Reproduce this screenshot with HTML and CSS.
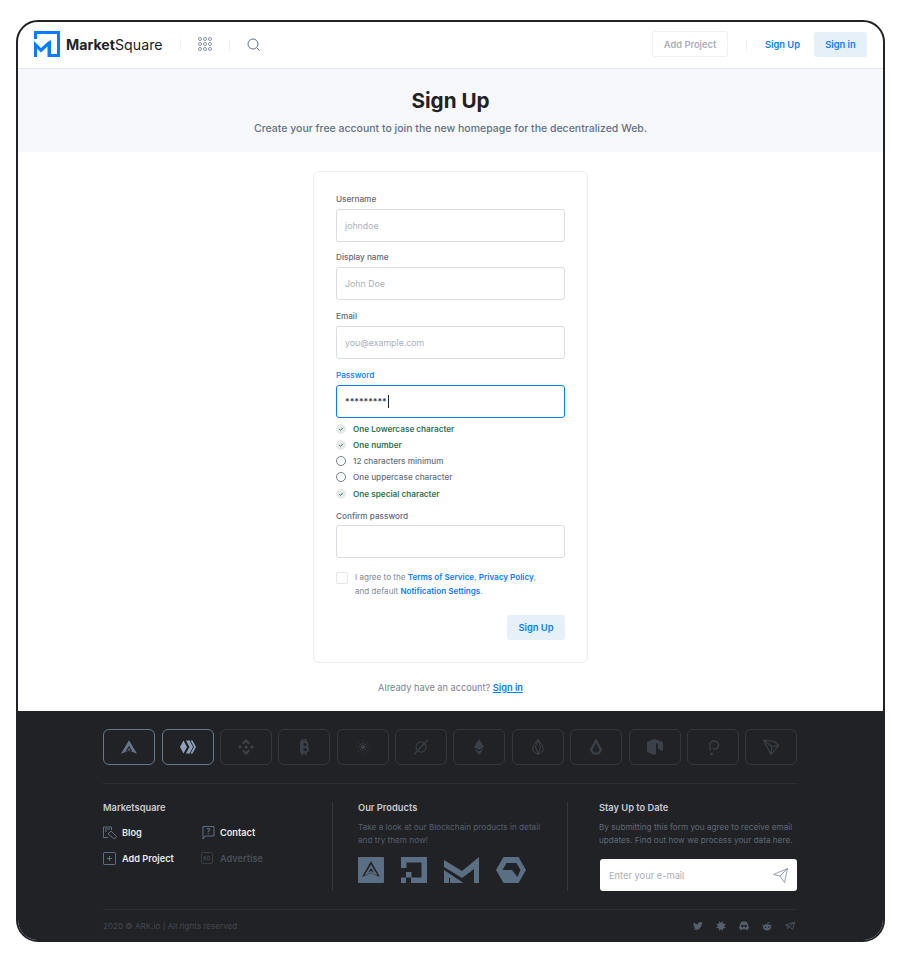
FILE: index.html
```html
<!DOCTYPE html>
<html lang="en">
<head>
<meta charset="utf-8">
<title>Sign Up - MarketSquare</title>
<link rel="stylesheet" href="styles.css">
</head>
<body>
<div class="frame">
  <header class="nav">
    <svg class="logo" viewBox="0 0 26 26"><path fill="#0a7cff" d="M0 0H26V26H17V23H23V3H3V8H0z"/><path fill="#0a7cff" d="M0 10L7 17L13.500 11L17 9V26H13.500V15.500L7 21.500L3 17.500V26H0z"/></svg>
    <span class="brand"><b>Market</b>Square</span>
    <i class="nav-sep"></i>
    <svg class="grid-ic" viewBox="0 0 14 14" fill="none" stroke="#6c7786" stroke-width=".9"><rect x=".6" y=".6" width="2.800" height="2.800" rx="1"/><rect x="5.600" y=".6" width="2.800" height="2.800" rx="1"/><rect x="10.600" y=".6" width="2.800" height="2.800" rx="1"/><rect x=".6" y="5.600" width="2.800" height="2.800" rx="1"/><rect x="5.600" y="5.600" width="2.800" height="2.800" rx="1"/><rect x="10.600" y="5.600" width="2.800" height="2.800" rx="1"/><rect x=".6" y="10.600" width="2.800" height="2.800" rx="1"/><rect x="5.600" y="10.600" width="2.800" height="2.800" rx="1"/><rect x="10.600" y="10.600" width="2.800" height="2.800" rx="1"/></svg>
    <i class="nav-sep"></i>
    <svg class="search-ic" viewBox="0 0 13 13" fill="none" stroke="#66717f" stroke-width="1"><circle cx="6" cy="6" r="5"/><path d="M9.700 9.700L12.500 12.500"/></svg>
    <span class="spacer"></span>
    <a class="btn-ghost">Add Project</a>
    <i class="nav-sep tall"></i>
    <a class="link-up">Sign Up</a>
    <a class="btn-light">Sign in</a>
  </header>

  <section class="hero">
    <h1>Sign Up</h1>
    <p>Create your free account to join the new homepage for the decentralized Web.</p>
  </section>

  <main class="content">
    <form class="card">
      <label class="lbl">Username</label>
      <div class="input ph">johndoe</div>
      <label class="lbl">Display name</label>
      <div class="input ph">John Doe</div>
      <label class="lbl">Email</label>
      <div class="input ph">you@example.com</div>
      <label class="lbl active">Password</label>
      <div class="input focus"><span class="stars">*********</span><i class="caret"></i></div>
      <ul class="rules">
        <li class="ok"><svg viewBox="0 0 10 10"><circle cx="5" cy="5" r="5" fill="#e6eae9"/><path d="M3.200 5.200l1.300 1.200 2.300-2.500" fill="none" stroke="#2f7d5b" stroke-width="1"/></svg>One Lowercase character</li>
        <li class="ok"><svg viewBox="0 0 10 10"><circle cx="5" cy="5" r="5" fill="#e6eae9"/><path d="M3.200 5.200l1.300 1.200 2.300-2.500" fill="none" stroke="#2f7d5b" stroke-width="1"/></svg>One number</li>
        <li><svg viewBox="0 0 10 10"><circle cx="5" cy="5" r="4.500" fill="none" stroke="#66717f" stroke-width=".9"/></svg>12 characters minimum</li>
        <li><svg viewBox="0 0 10 10"><circle cx="5" cy="5" r="4.500" fill="none" stroke="#66717f" stroke-width=".9"/></svg>One uppercase character</li>
        <li class="ok"><svg viewBox="0 0 10 10"><circle cx="5" cy="5" r="5" fill="#e6eae9"/><path d="M3.200 5.200l1.300 1.200 2.300-2.500" fill="none" stroke="#2f7d5b" stroke-width="1"/></svg>One special character</li>
      </ul>
      <label class="lbl tight">Confirm password</label>
      <div class="input"></div>
      <div class="agree">
        <span class="check"></span>
        <p>I agree to the <a>Terms of Service</a>, <a>Privacy Policy</a>,<br>and default <a>Notification Settings</a>.</p>
      </div>
      <div class="actions"><a class="btn-light big">Sign Up</a></div>
    </form>
    <p class="already">Already have an account? <a>Sign in</a></p>
  </main>

  <footer class="footer">
    <div class="coins">
      <div class="coin on"><svg viewBox="0 0 18 15"><path fill="#66788c" d="M9 0L18 15L9 11.500L0 15z"/><path fill="#212225" d="M9 6L5 12.500 9 10.800 13 12.500z"/><path fill="#66788c" d="M9 8.300L7.500 11 9 10.300 10.500 11z"/></svg></div>
      <div class="coin on"><svg viewBox="0 0 16 13"><path fill="#8fa3b8" d="M3.500 0L0 6.500 3.500 13 7 6.500zM6 0h3.500L13 6.500 9.500 13H6l3.500-6.500zM10.500 0h2L16 6.500 12.500 13h-2L14 6.500z"/></svg></div>
      <div class="coin"><svg viewBox="0 0 16 16"><path fill="#3c4149" d="M8 0l4 4-1.500 1.500L8 3 5.500 5.500 4 4zM8 6L10 8 8 10 6 8zM2 6l2 2-2 2-2-2zM14 6l2 2-2 2-2-2zM8 16l-4-4 1.500-1.500L8 13l2.500-2.500L12 12z"/></svg></div>
      <div class="coin"><svg viewBox="0 0 12 16"><path fill="none" stroke="#3c4149" stroke-width="2" d="M3 3h4a2.500 2.500 0 0 1 0 5H3h4.500a2.500 2.500 0 0 1 0 5H3zM4.500 0v16M7.500 0v3M7.500 13v3"/></svg></div>
      <div class="coin"><svg viewBox="0 0 16 16" fill="#3c4149"><circle cx="8" cy="8" r="2"/><circle cx="11.500" cy="8" r=".7"/><circle cx="10.500" cy="10.500" r=".7"/><circle cx="8" cy="11.500" r=".7"/><circle cx="5.500" cy="10.500" r=".7"/><circle cx="4.500" cy="8" r=".7"/><circle cx="5.500" cy="5.500" r=".7"/><circle cx="8" cy="4.500" r=".7"/><circle cx="10.500" cy="5.500" r=".7"/><circle cx="14.500" cy="8" r=".5"/><circle cx="12.600" cy="12.600" r=".5"/><circle cx="8" cy="14.500" r=".5"/><circle cx="3.400" cy="12.600" r=".5"/><circle cx="1.500" cy="8" r=".5"/><circle cx="3.400" cy="3.400" r=".5"/><circle cx="8" cy="1.500" r=".5"/><circle cx="12.600" cy="3.400" r=".5"/></svg></div>
      <div class="coin"><svg viewBox="0 0 16 16" fill="none" stroke="#3c4149" stroke-width="1.100"><circle cx="8" cy="8" r="5"/><path d="M1 15.500L15 .5"/></svg></div>
      <div class="coin"><svg viewBox="0 0 10 16"><path fill="#3c4149" d="M5 0l5 8-5 3-5-3zM0 9.500l5 3 5-3L5 16z"/></svg></div>
      <div class="coin"><svg viewBox="0 0 12 16" fill="none" stroke="#3c4149" stroke-width="1"><path d="M6 .5l4 5 1.500 6L6 15.500.5 11.500 2 5.500zM6 .5L3.500 8 6 15.500 8.500 8z"/></svg></div>
      <div class="coin"><svg viewBox="0 0 14 16" fill="none" stroke="#3c4149" stroke-width="2.200"><path d="M7 1.500L2 11l2.500 3.500h5L12 11z"/></svg></div>
      <div class="coin"><svg viewBox="0 0 16 16"><path fill="#3c4149" d="M0 3l7-3 9 3v9l-5-2V5L9 4v11l-2 1-7-3z"/></svg></div>
      <div class="coin"><svg viewBox="0 0 12 16" fill="none" stroke="#3c4149" stroke-width="1.300"><path d="M3 12V4.500A4.500 4 0 1 1 6 10"/><circle cx="4.500" cy="15" r=".6"/></svg></div>
      <div class="coin"><svg viewBox="0 0 16 16" fill="none" stroke="#3c4149" stroke-width="1.100"><path d="M.5 1l11 1.500 4 4L8 15.500zM.5 1L9 7.500 8 15.500M9 7.500l6.500-1"/></svg></div>
    </div>

    <div class="columns">
      <div class="col col-a">
        <h4>Marketsquare</h4>
        <div class="menu">
          <a><svg viewBox="0 0 14 14" fill="none" stroke="#66788c" stroke-width=".9"><path d="M.5 9V1h8v3M.5 9v2.500H5"/><path d="M5 8l3-3 5.500 5.500-2 2.500z"/><path d="M2 3h5M2 5h2"/></svg>Blog</a>
          <a><svg viewBox="0 0 14 14" fill="none" stroke="#66788c" stroke-width=".9"><path d="M2 .5h11V10H4l-2 3z"/><text x="7.500" y="8" font-size="7" fill="#66788c" stroke="none" text-anchor="middle">?</text></svg>Contact</a>
          <a><svg viewBox="0 0 14 14" fill="none" stroke="#66788c" stroke-width=".9"><rect x=".5" y=".5" width="12" height="12" rx="1"/><path d="M6.500 4v5M4 6.500h5"/></svg>Add Project</a>
          <a class="dim"><svg viewBox="0 0 14 14" fill="none" stroke="#3c4149" stroke-width=".9"><rect x=".5" y=".5" width="11" height="11" rx="1"/><path d="M3 8V4.500h1.500V8M3 6.500h1.500M6.500 4.500V8h2V4.500z"/></svg>Advertise</a>
        </div>
      </div>
      <div class="col col-b">
        <h4>Our Products</h4>
        <p>Take a look at our Blockchain products in detail<br>and try them now!</p>
        <div class="products">
          <svg class="p1" viewBox="0 0 26 26"><rect width="26" height="26" rx="1" fill="#5b6f84"/><path d="M13 4L22 20 13 16 4 20z" fill="#212225"/><path d="M13 7.500L19.500 18.500 13 15.500 6.500 18.500z" fill="#5b6f84"/><path d="M13 11L10 15.500 13 14 16 15.500z" fill="#212225"/></svg>
          <svg class="p2" viewBox="0 0 26 26"><path fill="#5b6f84" d="M0 0h26v26H10v-5.500h10.500v-15h-15V11H0zM5 15h5.500v5.500H5zM0 20.500h5V26H0z"/></svg>
          <svg class="p3" viewBox="0 0 35 26"><path fill="#5b6f84" d="M0 3L18 14 35 0V26H30V12L18 21 0 10zM0 13L19.500 26H6V21L5 20.500V26H0z"/></svg>
          <svg class="p4" viewBox="0 0 30 26"><path fill="#5b6f84" fill-rule="evenodd" d="M7.500 0h15L30 13l-7.500 13h-15L0 13zM6.500 13L10.500 6H20.500L24.500 13 21.500 20 16 13z"/></svg>
        </div>
      </div>
      <div class="col col-c">
        <h4>Stay Up to Date</h4>
        <p>By submitting this form you agree to receive email<br>updates. Find out how we process your data here.</p>
        <div class="subscribe">
          <span>Enter your e-mail</span>
          <svg viewBox="0 0 15 15" fill="none" stroke="#8a94a1" stroke-width=".9"><path d="M.5 6.500L14.500.5 11.500 14.500 7 8zM7 8L14.500.5"/></svg>
        </div>
      </div>
    </div>

    <div class="bottom">
      <span class="copy">2020 © ARK.io | All rights reserved</span>
      <div class="social">
        <svg viewBox="0 0 12 10"><path fill="#56606d" d="M0 8.500c3 2 9.500 1.500 10.500-6L12 1l-1.500.2L11.500 0 10 .7C8.500-.8 5.500.5 6 3 4 3 2 2 1 .5.300 2 .8 3.500 1.500 4L.5 3.800C.5 5 1.500 6 2.500 6.200H1.300C1.700 7.200 2.500 7.700 3.500 7.800 2.500 8.500 1.300 8.700 0 8.500z"/></svg>
        <svg viewBox="0 0 10 10"><path fill="#56606d" d="M3 0l2 2 2-2v2.500L10 3 8 5l2 2-3 .5V10L5 8l-2 2V7.500L0 7l2-2-2-2 3-.5z"/></svg>
        <svg viewBox="0 0 11 10"><path fill="#56606d" fill-rule="evenodd" d="M2 1l2-1h3l2 1 2 6-2 3-1.500-1.500h-4L2 10 0 7zM3.800 3.500a1.200 1.200 0 1 0 0 3 1.200 1.200 0 0 0 0-3zM7.200 3.500a1.200 1.200 0 1 0 0 3 1.200 1.200 0 0 0 0-3z"/></svg>
        <svg viewBox="0 0 11 10"><path fill="#56606d" fill-rule="evenodd" d="M5.500 3C9 3 10 5 10 6.500 10 8.500 8 10 5.500 10S1 8.500 1 6.500C1 5 2 3 5.500 3zM3.800 5.500a.9.9 0 1 0 0 1.800.9.9 0 0 0 0-1.800zM7.200 5.500a.9.900 0 1 0 0 1.800.9.9 0 0 0 0-1.800zM0 4.500a1 1 0 0 1 2 0zM9 4.500a1 1 0 0 1 2 0zM6 3l.5-2.500L9 1a.7.7 0 0 0 0 .5L7 1.200 6.600 3z"/></svg>
        <svg viewBox="0 0 11 10" fill="none" stroke="#56606d" stroke-width=".8"><path d="M.5 4L10.500.8 8.500 9 5 5.500zM5 5.500L10.500.8M3 5v3l2-2.500"/></svg>
      </div>
    </div>
  </footer>
</div>
</body>
</html>
```

FILE: styles.css
```css
* { box-sizing: border-box; }
html, body { margin: 0; padding: 0; background: #fff; }
body { font-family: Inter, "Liberation Sans", sans-serif; color: #212225; }
a { cursor: pointer; }
ul { list-style: none; margin: 0; padding: 0; }

.frame {
  margin: 20px 0 0 16px;
  width: 869px;
  height: 922px;
  border: 2px solid #212225;
  border-radius: 22px;
  overflow: hidden;
  display: flex;
  flex-direction: column;
  background: #fff;
}

/* nav */
.nav {
  height: 47px;
  flex: none;
  border-bottom: 1px solid #e3e6ec;
  display: flex;
  align-items: center;
  padding: 0 16px 2px;
}
.logo { width: 26px; height: 26px; flex: none; }
.brand { margin-left: 6px; font-size: 14.2px; color: #212225; font-weight: 400; }
.brand b { font-weight: 700; }
.nav-sep { width: 1px; height: 11px; background: #eef0f3; flex: none; }
.brand + .nav-sep { margin-left: 17px; }
.grid-ic { width: 14px; height: 14px; margin: 0 17px; flex: none; }
.search-ic { width: 13px; height: 13px; margin-left: 17px; flex: none; }
.spacer { flex: 1; }
.btn-ghost {
  width: 76px;
  height: 26px;
  border: 1px solid #eef0f3;
  border-radius: 3px;
  font-size: 9.3px;
  font-weight: 600;
  color: #a9afb8;
  display: flex;
  align-items: center;
  justify-content: center;
}
.nav-sep.tall { margin-left: 18px; }
.link-up { margin-left: 18px; font-size: 9.3px; font-weight: 600; color: #0a7cff; }
.btn-light {
  background: #e5f0f8;
  color: #0a7cff;
  border-radius: 3px;
  font-weight: 600;
  font-size: 9.3px;
  display: flex;
  align-items: center;
  justify-content: center;
  width: 53px;
  height: 25px;
  margin-left: 14px;
}

/* hero */
.hero {
  flex: none;
  height: 83px;
  background: #f7f8fb;
  text-align: center;
  padding-top: 19px;
}
.hero h1 { margin: 0; font-size: 20.7px; line-height: 25px; font-weight: 700; color: #212225; }
.hero p { margin: 9px 0 0; font-size: 10.5px; line-height: 14px; font-weight: 500; color: #637282; }

/* card */
.content { flex: 1; padding-top: 19px; display: flex; flex-direction: column; align-items: center; }
.card {
  width: 275px;
  height: 492px;
  border: 1px solid #e9ecf0;
  border-radius: 6px;
  padding: 21.8px 22px 0;
  display: flex;
  flex-direction: column;
}
.lbl { font-size: 8.2px; line-height: 10px; font-weight: 500; color: #5f6a78; margin-bottom: 5px; }
.lbl.active { color: #0a7cff; }
.lbl.tight { margin-bottom: 4px; }
.input {
  height: 33px;
  flex: none;
  width: 229px;
  border: 1px solid #d8dce3;
  border-radius: 3px;
  margin-bottom: 10.6px;
  display: flex;
  align-items: center;
  padding: 0 8px;
  font-size: 8.8px;
}
.input.ph { color: #aab0b9; }
.input.focus { border: 1.5px solid #0a7cff; margin-bottom: 3px; }
.stars { color: #3c4149; font-size: 8.6px; letter-spacing: 0; font-weight: 600; margin-top: 2px; }
.caret { width: 1px; height: 13px; background: #212225; margin-left: 1.5px; }

.rules { margin-bottom: 9px; }
.rules li {
  display: flex;
  align-items: center;
  height: 16.25px;
  font-size: 8.2px;
  font-weight: 500;
  color: #66717f;
}
.rules li.ok { color: #2f7453; font-weight: 600; }
.rules svg { width: 10px; height: 10px; margin-right: 7px; flex: none; }

.agree { display: flex; margin-top: 2px; }
.check { width: 12px; height: 12px; border: 1px solid #e3e6ec; border-radius: 2px; margin-top: 2px; flex: none; }
.agree p { margin: 0 0 0 7px; font-size: 8.1px; line-height: 14px; color: #80899a; }
.agree a { color: #0a7cff; font-weight: 600; }
.actions { display: flex; justify-content: flex-end; margin-top: 17px; }
.btn-light.big { width: 58px; height: 25px; }

.already { margin: 19px 0 0; font-size: 9.2px; line-height: 12px; color: #7b8491; }
.already a { color: #0a7cff; font-weight: 600; text-decoration: underline; }

/* footer */
.footer {
  flex: none;
  height: 229px;
  background: #212225;
  padding: 18px 86px 0 85px;
}
.coins { display: flex; gap: 6.36px; height: 37px; padding-left: .3px; }
.coin {
  flex: none;
  width: 52px;
  height: 36px;
  border: 1px solid #34383e;
  border-radius: 6px;
  display: flex;
  align-items: center;
  justify-content: center;
}
.coin.on { border-color: #66788c; }
.coin svg { width: 16px; height: 16px; }
.columns {
  margin-top: 17px;
  border-top: 1px solid #2d3035;
  padding-top: 18px;
  height: 126px;
  display: flex;
}
.col { height: 89px; }
.col h4 { margin: 0; font-size: 9.3px; line-height: 11px; font-weight: 600; color: #c7cbd1; }
.col p { margin: 8px 0 0; font-size: 8.2px; line-height: 12.5px; color: #56606d; }
.col-a { width: 230px; border-right: 1px solid #34383e; }
.col-b { width: 235px; padding-left: 25px; border-right: 1px solid #34383e; }
.col-c { padding-left: 31px; flex: 1; }
.col-c p { color: #5f6a78; }
.menu { display: grid; grid-template-columns: 98px 90px; row-gap: 13px; margin-top: 13px; }
.menu a { display: flex; align-items: center; height: 13px; font-size: 9.2px; font-weight: 600; color: #e8eaed; }
.menu a svg { width: 14px; height: 14px; margin-right: 5px; flex: none; }
.menu a.dim { color: #4a5059; }
.products { display: flex; gap: 17px; margin-top: 11px; align-items: center; }
.p1, .p2 { width: 26px; height: 26px; }
.p3 { width: 35px; height: 26px; }
.p4 { width: 30px; height: 26px; }
.subscribe {
  margin: 13px 0 0 1px;
  height: 32px;
  width: 197px;
  background: #fff;
  border-radius: 3px;
  display: flex;
  align-items: center;
  justify-content: space-between;
  padding: 0 9px;
  font-size: 9.3px;
  color: #a9afb8;
}
.subscribe svg { width: 15px; height: 15px; }
.bottom {
  border-top: 1px solid #2d3035;
  height: 33px;
  display: flex;
  align-items: center;
  justify-content: space-between;
}
.copy { font-size: 8.1px; color: #434952; }
.social { display: flex; align-items: center; gap: 13px; padding-right: 2px; }
.social svg { width: 10px; height: 10px; }
```
